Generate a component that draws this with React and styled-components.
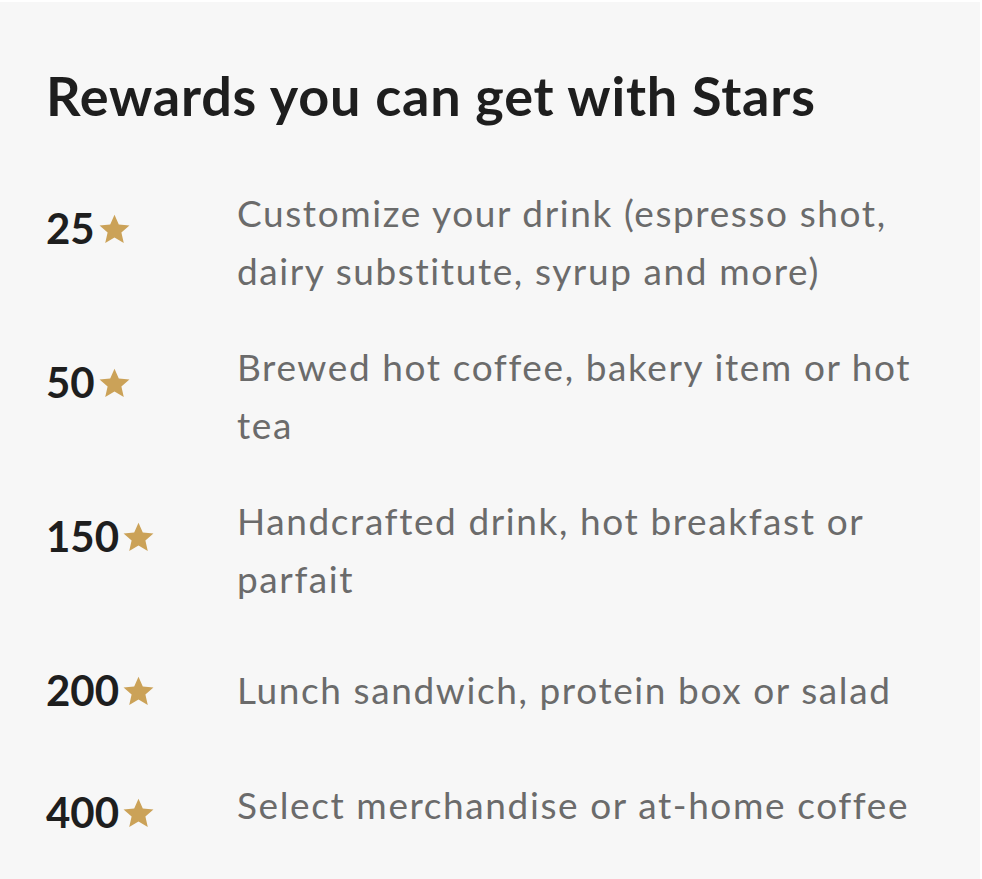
import styled, { createGlobalStyle } from "styled-components"

const GlobalStyle = createGlobalStyle`
  body {
    margin: 0;
    background: #ffffff;
    font-family: Lato, "Noto Sans", sans-serif;
  }
`

const rewards = [
  { stars: 25, text: "Customize your drink (espresso shot, dairy substitute, syrup and more)" },
  { stars: 50, text: "Brewed hot coffee, bakery item or hot tea" },
  { stars: 150, text: "Handcrafted drink, hot breakfast or parfait" },
  { stars: 200, text: "Lunch sandwich, protein box or salad" },
  { stars: 400, text: "Select merchandise or at-home coffee" },
]

const Star = () => (
  <StarIcon viewBox="0 0 24 24" aria-hidden="true">
    <path d="M12 1.8l2.95 6.75 7.3.68-5.52 4.86 1.62 7.2L12 17.55l-6.35 3.74 1.62-7.2L1.75 9.23l7.3-.68z" />
  </StarIcon>
)

export default function App() {
  return (
    <>
      <GlobalStyle />
      <Panel>
        <Heading>Rewards you can get with Stars</Heading>
        <List>
          {rewards.map((reward) => (
            <Row key={reward.stars}>
              <Amount>
                {reward.stars}
                <Star />
              </Amount>
              <Description>{reward.text}</Description>
            </Row>
          ))}
        </List>
      </Panel>
    </>
  )
}

const Panel = styled.section`
  margin-top: 2px;
  width: 980px;
  min-height: 877px;
  box-sizing: border-box;
  background: #f7f7f7;
  padding: 62px 46px 0 46px;
`
const Heading = styled.h2`
  margin: 0;
  font-size: 54px;
  font-weight: 700;
  line-height: 64px;
  color: #1e1e1e;
  letter-spacing: 0.8px;
`
const List = styled.div`
  display: flex;
  flex-direction: column;
  gap: 38px;
  margin-top: 56px;
`
const Amount = styled.div`
  width: 191px;
  flex-shrink: 0;
  font-size: 42px;
  font-weight: 700;
  line-height: 88px;
  height: 88px;
  color: #1e1e1e;
  white-space: nowrap;
`
const StarIcon = styled.svg`
  width: 35px;
  height: 35px;
  fill: #cba258;
  margin-left: 2px;
  vertical-align: -3px;
`
const Description = styled.p`
  margin: 0;
  width: 700px;
  min-height: 88px;
  display: flex;
  align-items: center;
  font-size: 37px;
  line-height: 58px;
  color: #6b6b6b;
  letter-spacing: 1.6px;
`
const Row = styled.div`
  display: flex;
  align-items: flex-start;

  &:last-child {
    margin-top: -4px;
  }
  &:last-child ${Description} {
    min-height: 74px;
  }
`
